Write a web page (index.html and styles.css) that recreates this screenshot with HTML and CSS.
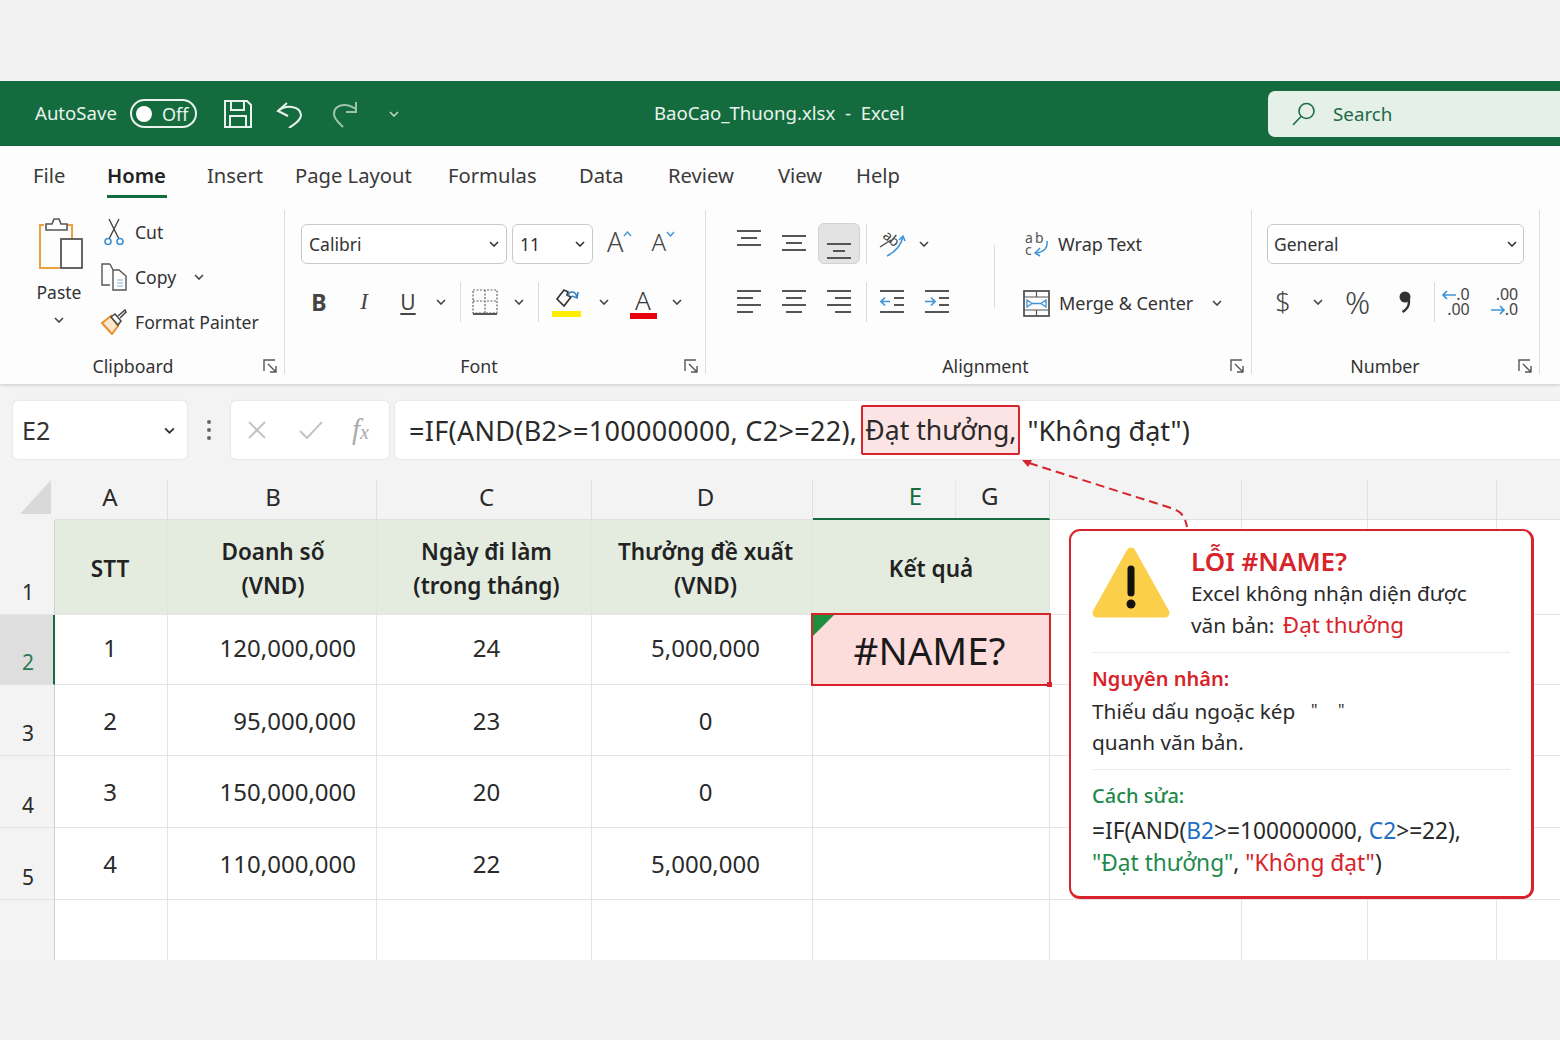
FILE: index.html
```html
<!DOCTYPE html>
<html lang="en">

<head>
    <meta charset="UTF-8">
    <title>BaoCao_Thuong.xlsx - Excel</title>
    <link rel="stylesheet" href="styles.css">
</head>

<body>
    <svg class="defs" width="0" height="0">
        <symbol id="chev" viewBox="0 0 10 6">
            <path d="M1 1l4 4 4-4" fill="none" stroke="currentColor" stroke-width="1.6" />
        </symbol>
        <symbol id="launch" viewBox="0 0 15 15">
            <path d="M1 12V1h11M5 5l8 8M13 7v6H7" fill="none" stroke="#555" stroke-width="1.4" />
        </symbol>
    </svg>

    <div class="app">
        <header class="titlebar">
            <div class="autosave">AutoSave</div>
            <div class="toggle"><i></i><span>Off</span></div>
            <svg class="save" width="28" height="28" viewBox="0 0 28 28" fill="none" stroke="#e9f3ed" stroke-width="2">
                <path d="M1 1h22l4 4v22H1z" />
                <path d="M7 1v9h13V1M6 27V16h16v11" />
            </svg>
            <svg class="undo" width="26" height="28" viewBox="0 0 26 28" fill="none" stroke="#e9f3ed" stroke-width="2">
                <path d="M11 3L2 11l10 5" />
                <path d="M2 11C9 5 24 5 25 15c0 6-7 9-12 13" />
            </svg>
            <svg class="redo" width="26" height="28" viewBox="0 0 26 28" fill="none" stroke="#9cc4ad" stroke-width="2">
                <path d="M24 2v10h-10" />
                <path d="M24 9C12 1 2 6 2 14c0 5 5 9 9 13" />
            </svg>
            <svg class="qa-more" width="10" height="6"><use href="#chev" /></svg>
            <div class="doc-name">BaoCao_Thuong.xlsx &nbsp;-&nbsp; Excel</div>
            <div class="search">
                <svg width="24" height="24" viewBox="0 0 24 24" fill="none" stroke="#1d6b45" stroke-width="1.6">
                    <circle cx="14.5" cy="9" r="7.5" />
                    <path d="M9 14.5L1 23" />
                </svg>
                <span>Search</span>
            </div>
        </header>

        <section class="ribbon">
            <nav class="tabs">
                <span>File</span>
                <span class="active">Home</span>
                <span>Insert</span>
                <span>Page Layout</span>
                <span>Formulas</span>
                <span>Data</span>
                <span>Review</span>
                <span>View</span>
                <span>Help</span>
            </nav>

            <div class="groups">
                <div class="group clipboard">
                    <div class="clip-body">
                        <div class="paste">
                            <svg width="44" height="52" viewBox="0 0 44 52" fill="none">
                                <path d="M5 7H1v43h20" stroke="#e8a13c" stroke-width="2" />
                                <path d="M28 7h5v14" stroke="#e8a13c" stroke-width="2" />
                                <path d="M7 12V6h6l2-5h5l2 5h6v6z" stroke="#555" stroke-width="1.6" fill="#fff" />
                                <rect x="22" y="21" width="21" height="29" stroke="#555" stroke-width="1.8" fill="#fff" />
                            </svg>
                            <span>Paste</span>
                            <svg class="chev" width="10" height="6"><use href="#chev" /></svg>
                        </div>
                        <div class="clip-list">
                            <div class="clip-item">
                                <svg width="26" height="28" viewBox="0 0 26 28" fill="none">
                                    <path d="M8 1l10 20M18 1L8 21" stroke="#444" stroke-width="1.4" />
                                    <circle cx="7" cy="23.500" r="3" stroke="#3b8fd0" stroke-width="1.6" />
                                    <circle cx="19" cy="23.500" r="3" stroke="#3b8fd0" stroke-width="1.6" />
                                </svg>
                                <span>Cut</span>
                            </div>
                            <div class="clip-item">
                                <svg width="26" height="28" viewBox="0 0 26 28" fill="none">
                                    <path d="M9 1H1v21h8" stroke="#555" stroke-width="1.4" />
                                    <path d="M9 1l3 6M12 7h6l7 6v14H12z" stroke="#555" stroke-width="1.4" fill="#fff" />
                                    <path d="M16 17h6M16 20h6M16 23h6" stroke="#7fb0d8" stroke-width="1.2" />
                                </svg>
                                <span>Copy</span>
                                <svg class="chev copy-chev" width="10" height="6"><use href="#chev" /></svg>
                            </div>
                            <div class="clip-item">
                                <svg width="26" height="26" viewBox="0 0 26 26" fill="none">
                                    <path d="M1 14l9-7 7 10-6 8z" stroke="#e8922c" stroke-width="2" fill="#fbe7cd" />
                                    <path d="M10 8l4-3 6 7-3 4z" stroke="#444" stroke-width="1.5" fill="#fff" />
                                    <path d="M17 7l7-6 1 2-6 6" stroke="#444" stroke-width="1.5" />
                                </svg>
                                <span>Format Painter</span>
                            </div>
                        </div>
                    </div>
                    <div class="group-foot">
                        <span class="group-label">Clipboard</span>
                        <svg class="launcher" width="15" height="15"><use href="#launch" /></svg>
                    </div>
                </div>

                <div class="group font">
                    <div class="font-row1">
                        <div class="combo font-name">Calibri <svg width="10" height="6"><use href="#chev" /></svg></div>
                        <div class="combo font-size">11 <svg width="10" height="6"><use href="#chev" /></svg></div>
                        <div class="grow-a">A<svg width="9" height="6" viewBox="0 0 9 6"><path d="M1 5l3.500-4L8 5" fill="none" stroke="#4a9bd8" stroke-width="1.500" /></svg></div>
                        <div class="shrink-a">A<svg width="9" height="6" viewBox="0 0 9 6"><path d="M1 1l3.500 4L8 1" fill="none" stroke="#4a9bd8" stroke-width="1.500" /></svg></div>
                    </div>
                    <div class="font-row2">
                        <b class="fmt">B</b>
                        <i class="fmt italic">I</i>
                        <span class="fmt under">U</span>
                        <svg class="chev" width="10" height="6"><use href="#chev" /></svg>
                        <div class="sep"></div>
                        <svg width="26" height="26" viewBox="0 0 26 26" fill="none">
                            <path d="M1 1h24v23H1zM13 1v23M1 12h24" stroke="#666" stroke-width="1.200" stroke-dasharray="2 1.500" />
                            <path d="M1 25h24" stroke="#555" stroke-width="2" />
                        </svg>
                        <svg class="chev" width="10" height="6"><use href="#chev" /></svg>
                        <div class="sep"></div>
                        <div class="swatch-btn">
                            <svg width="26" height="20" viewBox="0 0 26 20" fill="none">
                                <path d="M4 11l7-9 4 2-1 3 4 2-7 9z" stroke="#333" stroke-width="1.700" />
                                <path d="M15 8c1-5 7-6 9 1M25 4l-1 6-5-2" stroke="#2f7fc4" stroke-width="1.600" />
                            </svg>
                            <i class="bar-yellow"></i>
                        </div>
                        <svg class="chev" width="10" height="6"><use href="#chev" /></svg>
                        <div class="swatch-btn text-a">
                            <span>A</span>
                            <i class="bar-red"></i>
                        </div>
                        <svg class="chev" width="10" height="6"><use href="#chev" /></svg>
                    </div>
                    <div class="group-foot">
                        <span class="group-label">Font</span>
                        <svg class="launcher" width="15" height="15"><use href="#launch" /></svg>
                    </div>
                </div>

                <div class="group alignment">
                    <div class="align-body">
                        <div class="align-left">
                            <div class="align-row top-row">
                                <svg width="24" height="17" viewBox="0 0 24 17"><path d="M0 1h24M4 8h16M0 15h24" stroke="#555" stroke-width="1.800" /></svg>
                                <svg width="24" height="17" viewBox="0 0 24 17"><path d="M0 1h24M4 8h16M0 15h24" stroke="#555" stroke-width="1.800" /></svg>
                                <div class="align-on">
                                    <svg width="24" height="17" viewBox="0 0 24 17"><path d="M0 1h24M6 8h12M0 15h24" stroke="#555" stroke-width="1.800" /></svg>
                                </div>
                                <div class="sep"></div>
                                <svg class="open-icon" width="27" height="25" viewBox="0 0 27 25" fill="none">
                                    <text class="orient-text" transform="translate(3 5) rotate(40)">ab</text>
                                    <path d="M1 15l11-7" stroke="#444" stroke-width="1.300" />
                                    <path d="M8 24C16 20 22 13 24 5M20 8l4-4 2 5" stroke="#3f95d6" stroke-width="1.500" />
                                </svg>
                                <svg class="chev" width="10" height="6"><use href="#chev" /></svg>
                            </div>
                            <div class="align-row bottom-row">
                                <svg width="24" height="24" viewBox="0 0 24 24"><path d="M0 1h24M0 8h16M0 15h24M0 22h16" stroke="#555" stroke-width="1.800" /></svg>
                                <svg width="24" height="24" viewBox="0 0 24 24"><path d="M0 1h24M4 8h16M0 15h24M4 22h16" stroke="#555" stroke-width="1.800" /></svg>
                                <svg width="24" height="24" viewBox="0 0 24 24"><path d="M0 1h24M8 8h16M0 15h24M8 22h16" stroke="#555" stroke-width="1.800" /></svg>
                                <div class="sep"></div>
                                <svg width="24" height="24" viewBox="0 0 24 24" fill="none">
                                    <path d="M0 1h24M14 8h10M14 15h10M0 22h24" stroke="#555" stroke-width="1.800" />
                                    <path d="M10 11.500H1M5 7.500l-4 4 4 4" stroke="#3f95d6" stroke-width="1.700" />
                                </svg>
                                <svg width="24" height="24" viewBox="0 0 24 24" fill="none">
                                    <path d="M0 1h24M14 8h10M14 15h10M0 22h24" stroke="#555" stroke-width="1.800" />
                                    <path d="M0 11.500h9M6 7.500l4 4-4 4" stroke="#3f95d6" stroke-width="1.700" />
                                </svg>
                            </div>
                        </div>
                        <div class="vsep"></div>
                        <div class="align-right">
                            <div class="wrap-item">
                                <svg class="open-icon" width="26" height="26" viewBox="0 0 26 26" fill="none">
                                    <text class="wrap-glyph" x="2" y="12">a</text>
                                    <text class="wrap-glyph" x="12" y="12">b</text>
                                    <text class="wrap-glyph" x="2" y="24">c</text>
                                    <path d="M24 10c1 7-3 11-11 12M17 17l-5 5 5 3" stroke="#3f95d6" stroke-width="1.500" />
                                </svg>
                                <span>Wrap Text</span>
                            </div>
                            <div class="wrap-item">
                                <svg width="27" height="27" viewBox="0 0 27 27" fill="none">
                                    <rect x="1" y="1" width="25" height="25" stroke="#555" stroke-width="1.800" />
                                    <path d="M1 7h25M1 20h25M13.500 1v6M13.500 20v6" stroke="#555" stroke-width="1.200" />
                                    <path d="M4 10v7l5-3.500zM23 10v7l-5-3.500zM9 13.500h9" stroke="#3f95d6" stroke-width="1.300" />
                                </svg>
                                <span>Merge &amp; Center</span>
                                <svg class="chev merge-chev" width="10" height="6"><use href="#chev" /></svg>
                            </div>
                        </div>
                    </div>
                    <div class="group-foot">
                        <span class="group-label">Alignment</span>
                        <svg class="launcher" width="15" height="15"><use href="#launch" /></svg>
                    </div>
                </div>

                <div class="group number">
                    <div class="combo general">General <svg width="10" height="6"><use href="#chev" /></svg></div>
                    <div class="number-row">
                        <span class="num-sym dollar">$</span>
                        <svg class="chev" width="10" height="6"><use href="#chev" /></svg>
                        <span class="num-sym percent">%</span>
                        <svg width="12" height="22" viewBox="0 0 12 22">
                            <circle cx="6" cy="6" r="5.500" fill="#333" />
                            <path d="M9.500 7c1.500 6-1 11-6 14" fill="none" stroke="#333" stroke-width="2.400" />
                        </svg>
                        <div class="sep"></div>
                        <div class="dec">
                            <span class="dec-line"><svg width="14" height="10" viewBox="0 0 14 10" fill="none"><path d="M14 5H1M5 1L1 5l4 4" stroke="#3f95d6" stroke-width="1.700" /></svg>.0</span>
                            <span>.00</span>
                        </div>
                        <div class="dec">
                            <span>.00</span>
                            <span class="dec-line"><svg width="14" height="10" viewBox="0 0 14 10" fill="none"><path d="M0 5h13M9 1l4 4-4 4" stroke="#3f95d6" stroke-width="1.700" /></svg>.0</span>
                        </div>
                    </div>
                    <div class="group-foot">
                        <span class="group-label">Number</span>
                        <svg class="launcher" width="15" height="15"><use href="#launch" /></svg>
                    </div>
                </div>
            </div>
        </section>

        <section class="formula-bar">
            <div class="name-box"><span>E2</span><svg width="11" height="7"><use href="#chev" /></svg></div>
            <div class="dots"><i></i><i></i><i></i></div>
            <div class="fx-box">
                <svg width="20" height="20" viewBox="0 0 20 20"><path d="M2 2l16 16M18 2L2 18" stroke="#c4c4c4" stroke-width="2" /></svg>
                <svg width="24" height="18" viewBox="0 0 24 18" fill="none"><path d="M1 10l7 7L23 1" stroke="#c4c4c4" stroke-width="2" /></svg>
                <span class="fx">f<small>x</small></span>
            </div>
            <div class="formula"><span class="formula-start">=IF(AND(B2&gt;=100000000, C2&gt;=22),</span><span class="formula-bad">Đạt thưởng,</span>"Không đạt")</div>
        </section>

        <section class="sheet">
            <div class="hd corner"><i></i></div>
            <div class="hd col">A</div>
            <div class="hd col">B</div>
            <div class="hd col">C</div>
            <div class="hd col">D</div>
            <div class="hd col col-e"><span class="e">E</span><span class="g">G</span></div>
            <div class="hd col"></div>
            <div class="hd col"></div>
            <div class="hd col"></div>
            <div class="hd col last"></div>

            <div class="rh">1</div>
            <div class="c th">STT</div>
            <div class="c th">Doanh số<br>(VND)</div>
            <div class="c th">Ngày đi làm<br>(trong tháng)</div>
            <div class="c th">Thưởng đề xuất<br>(VND)</div>
            <div class="c th">Kết quả</div>
            <div class="c"></div><div class="c"></div><div class="c"></div><div class="c last"></div>

            <div class="rh sel">2</div>
            <div class="c row2">1</div>
            <div class="c row2 money">120,000,000</div>
            <div class="c row2">24</div>
            <div class="c row2">5,000,000</div>
            <div class="c err">#NAME?</div>
            <div class="c"></div><div class="c"></div><div class="c"></div><div class="c last"></div>

            <div class="rh">3</div>
            <div class="c">2</div>
            <div class="c money">95,000,000</div>
            <div class="c">23</div>
            <div class="c">0</div>
            <div class="c"></div>
            <div class="c"></div><div class="c"></div><div class="c"></div><div class="c last"></div>

            <div class="rh">4</div>
            <div class="c">3</div>
            <div class="c money">150,000,000</div>
            <div class="c">20</div>
            <div class="c">0</div>
            <div class="c"></div>
            <div class="c"></div><div class="c"></div><div class="c"></div><div class="c last"></div>

            <div class="rh">5</div>
            <div class="c">4</div>
            <div class="c money">110,000,000</div>
            <div class="c">22</div>
            <div class="c">5,000,000</div>
            <div class="c"></div>
            <div class="c"></div><div class="c"></div><div class="c"></div><div class="c last"></div>

            <div class="rh end"></div>
            <div class="c end"></div><div class="c end"></div><div class="c end"></div><div class="c end"></div><div class="c end"></div>
            <div class="c end"></div><div class="c end"></div><div class="c end"></div><div class="c last end"></div>
        </section>

        <!-- mui ten tu callout len cong thuc -->
        <svg class="pointer" width="180" height="80" viewBox="0 0 180 80" fill="none">
            <path d="M8 5L150 50C160 53 164 58 166 69" stroke="#d8232a" stroke-width="2" stroke-dasharray="9 5" />
            <path d="M1 2l10 0-4 7z" fill="#d8232a" />
        </svg>

        <aside class="callout">
            <div class="callout-top">
                <svg width="78" height="73" viewBox="0 0 78 73">
                    <path d="M39 5L73 66H5z" fill="#fbcf4a" stroke="#fbcf4a" stroke-width="9" stroke-linejoin="round" />
                    <path d="M39 22v24" stroke="#111" stroke-width="7" stroke-linecap="round" />
                    <circle cx="39" cy="57" r="4.500" fill="#111" />
                </svg>
                <div class="callout-head">
                    <h2>LỖI #NAME?</h2>
                    <p>Excel không nhận diện được</p>
                    <p>văn bản: <span class="red big">Đạt thưởng</span></p>
                </div>
            </div>
            <div class="callout-part">
                <h3 class="red">Nguyên nhân:</h3>
                <p>Thiếu dấu ngoặc kép <span class="quotes">"</span><span class="quotes">"</span></p>
                <p>quanh văn bản.</p>
            </div>
            <div class="callout-part fix">
                <h3 class="green">Cách sửa:</h3>
                <p>=IF(AND(<span class="blue">B2</span>&gt;=100000000, <span class="blue">C2</span>&gt;=22),</p>
                <p><span class="green">"Đạt thưởng"</span>, <span class="red">"Không đạt"</span>)</p>
            </div>
        </aside>
    </div>
</body>

</html>
```

FILE: styles.css
```css
* {
    box-sizing: border-box;
}

body {
    margin: 0;
    background-color: #f2f2f2;
    color: #333;
    font-family: "Noto Sans", "Open Sans", sans-serif;
    overflow: hidden;
}

svg {
    display: block;
    flex: none;
}

.defs {
    position: absolute;
}

.app {
    position: relative;
    width: 1560px;
    height: 1040px;
    padding-top: 81px;
    overflow: hidden;
}

/* title bar */
.titlebar {
    height: 65px;
    padding-left: 35px;
    background-color: #146c3e;
    color: #e9f3ed;
    display: flex;
    align-items: center;
    font-size: 18.6px;
    line-height: 24px;
    position: relative;
}

.autosave {
    width: 95px;
    padding-bottom: 2px;
}

.toggle {
    width: 67px;
    height: 29px;
    border: 2px solid #e9f3ed;
    border-radius: 15px;
    padding-left: 4px;
    display: flex;
    align-items: center;
    gap: 10px;
    font-size: 18px;
}

.toggle i {
    width: 16px;
    height: 16px;
    border-radius: 50%;
    background-color: #fff;
}

.save {
    margin-left: 27px;
}

.undo {
    margin-left: 24px;
}

.redo {
    margin-left: 30px;
}

.qa-more {
    margin-left: 31px;
    color: #b9d6c5;
}

.doc-name {
    margin-left: 255px;
    width: 614px;
    padding-bottom: 2px;
    white-space: nowrap;
}

.search {
    width: 292px;
    height: 46px;
    padding-left: 24px;
    border-radius: 7px 0 0 7px;
    background-color: #e4f0e8;
    color: #1d6b45;
    font-size: 18.8px;
    display: flex;
    align-items: center;
    gap: 17px;
}

/* ribbon */
.ribbon {
    height: 238px;
    background-color: #fdfdfd;
    box-shadow: 0 1px 3px rgba(0, 0, 0, 0.18);
    position: relative;
}

.tabs {
    height: 64px;
    padding: 15px 0 0 33px;
    display: grid;
    grid-template-columns: 74px 100px 88px 153px 131px 89px 110px 78px 60px;
    font-size: 20.2px;
    color: #3a3a3a;
}

.tabs span {
    justify-self: start;
    height: 37px;
    white-space: nowrap;
}

.tabs .active {
    width: 60px;
    font-weight: 600;
    border-bottom: 3px solid #146c3e;
    color: #222;
}

.groups {
    display: flex;
    height: 164px;
}

.group {
    height: 164px;
    border-right: 1px solid #dcdcdc;
    display: flex;
    flex-direction: column;
    position: relative;
    font-size: 17px;
}

.group-foot {
    margin-top: auto;
    height: 24px;
    padding-right: 6px;
    display: flex;
    align-items: flex-start;
}

.launcher {
    align-self: flex-end;
}

.group-label {
    flex: 1;
    padding-top: 4px;
    text-align: center;
    color: #333;
    font-size: 17.8px;
    line-height: 24px;
}

.clipboard .group-label {
    padding-left: 3px;
}

.font .group-label {
    padding-right: 11px;
}

.alignment .group-label {
    padding-left: 35px;
}

.chev {
    color: #444;
}

.sep {
    width: 1px;
    height: 40px;
    background-color: #dcdcdc;
    justify-self: center;
}

.combo {
    height: 40px;
    border: 1px solid #c9c9c9;
    border-radius: 6px;
    background-color: #fff;
    padding: 0 7px;
    color: #333;
    font-size: 17.5px;
    display: flex;
    align-items: center;
    justify-content: space-between;
}

/* clipboard */
.clipboard {
    width: 285px;
}

.clip-body {
    display: flex;
    padding: 8px 0 0 36px;
}

.paste {
    width: 46px;
    display: flex;
    flex-direction: column;
    align-items: center;
}

.paste svg:first-child {
    margin-left: 3px;
}

.paste span {
    margin-top: 10px;
    font-size: 17.5px;
    line-height: 24px;
}

.paste .chev {
    margin-top: 13px;
}

.clip-list {
    margin-left: 19px;
    display: flex;
    flex-direction: column;
    gap: 17px;
}

.clip-item {
    height: 28px;
    display: flex;
    align-items: center;
    gap: 8px;
    font-size: 17.6px;
    white-space: nowrap;
}

.copy-chev {
    margin-left: 10px;
}

/* font */
.font {
    width: 421px;
    padding-top: 14px;
}

.font-row1 {
    padding-left: 16px;
    display: flex;
}

.font-name {
    width: 206px;
}

.font-size {
    width: 81px;
    margin-left: 5px;
}

.grow-a,
.shrink-a {
    display: flex;
    height: 36px;
    font-size: 27px;
    line-height: 36px;
    font-weight: 300;
    color: #444;
}

.grow-a {
    margin-left: 14px;
}

.shrink-a {
    margin-left: 19px;
    font-size: 24px;
}

.grow-a svg,
.shrink-a svg {
    margin-top: 7px;
}

.font-row2 {
    margin-top: 18px;
    height: 40px;
    padding-left: 16px;
    display: grid;
    grid-template-columns: 36px 54px 34px 32px 6px 43px 26px 12px 44px 32px 46px 22px;
    align-items: center;
    justify-items: center;
}

.fmt {
    font-size: 23px;
    color: #444;
}

.italic {
    font-family: "Liberation Serif", serif;
}

.under {
    text-decoration: underline;
    text-underline-offset: 3px;
    font-size: 21px;
}

.swatch-btn {
    width: 30px;
    display: flex;
    flex-direction: column;
    align-items: center;
}

.bar-yellow,
.bar-red {
    width: 29px;
    height: 6px;
    margin-top: 3px;
    background-color: #ffee00;
}

.bar-red {
    width: 27px;
    margin-top: -2px;
    background-color: #e8000f;
}

.text-a {
    font-size: 26px;
    line-height: 30px;
    font-weight: 300;
}

/* alignment */
.alignment {
    width: 546px;
    padding-top: 14px;
}

.align-body {
    display: flex;
    padding-left: 21px;
}

.align-left {
    width: 235px;
}

.align-row {
    height: 40px;
    display: grid;
    align-items: center;
    justify-items: center;
}

.top-row {
    grid-template-columns: 43px 48px 42px 12px 40px 24px;
}

.top-row > svg:first-child {
    margin-top: -11px;
}

.top-row > svg:nth-child(2) {
    margin-top: -1px;
}

.bottom-row {
    margin-top: 18px;
    grid-template-columns: 43px 48px 42px 12px 40px 50px;
}

.align-on {
    width: 42px;
    height: 41px;
    margin-top: -1px;
    background-color: #e3e3e3;
    border: 1px solid #d2d2d2;
    border-radius: 6px;
    display: flex;
    align-items: center;
    justify-content: center;
    padding-top: 15px;
}

.open-icon {
    overflow: visible;
}

.orient-text {
    font-size: 14px;
    line-height: 14px;
    fill: #444;
}

.wrap-glyph {
    font-size: 14px;
    fill: #555;
}

.vsep {
    width: 1px;
    height: 63px;
    margin: 21px 0 0 32px;
    background-color: #dcdcdc;
}

.align-right {
    margin-left: 28px;
}

.wrap-item {
    height: 40px;
    display: flex;
    align-items: center;
    gap: 9px;
    font-size: 18px;
    white-space: nowrap;
}

.wrap-item + .wrap-item {
    margin-top: 19px;
}

.merge-chev {
    margin-left: 10px;
}

/* number */
.number {
    width: 288px;
    padding: 14px 0 0;
}

.general {
    width: 257px;
    margin-left: 15px;
    padding: 0 6px;
}

.number-row {
    margin-top: 18px;
    height: 40px;
    padding-left: 16px;
    display: grid;
    grid-template-columns: 30px 40px 39px 55px 4px 40px 57px;
    align-items: center;
    justify-items: center;
}

.num-sym {
    font-size: 27px;
    line-height: 36px;
    font-weight: 300;
    color: #444;
}

.percent {
    font-size: 31px;
}

.dec {
    display: flex;
    flex-direction: column;
    align-items: flex-end;
    font-size: 16px;
    line-height: 15px;
    color: #444;
}

.dec-line {
    display: flex;
    align-items: center;
}

/* formula bar */
.formula-bar {
    height: 88px;
    padding: 17px 0 0 13px;
    display: flex;
    align-items: flex-start;
    background-color: #f3f3f3;
}

.name-box,
.fx-box,
.formula {
    height: 58px;
    flex: none;
    background-color: #fff;
    border-radius: 5px;
    box-shadow: 0 0 2px rgba(0, 0, 0, 0.15);
    display: flex;
    align-items: center;
}

.name-box {
    width: 174px;
    padding: 0 12px 0 9px;
    justify-content: space-between;
    font-size: 25px;
}

.dots {
    width: 44px;
    height: 58px;
    flex: none;
    display: flex;
    flex-direction: column;
    align-items: center;
    justify-content: center;
    gap: 4px;
}

.dots i {
    width: 4px;
    height: 4px;
    border-radius: 50%;
    background-color: #666;
}

.fx-box {
    width: 158px;
    padding-left: 16px;
    gap: 32px;
}

.fx {
    font-family: "Liberation Serif", serif;
    font-style: italic;
    font-size: 29px;
    line-height: 30px;
    color: #aaa;
    margin-left: -3px;
}

.fx small {
    font-size: 20px;
}

.formula {
    width: 1180px;
    margin-left: 6px;
    padding-left: 14px;
    font-size: 27px;
    color: #2a2a2a;
    white-space: nowrap;
}

.formula-start {
    letter-spacing: 0.3px;
}

.formula-bad {
    height: 50px;
    margin: 0 7px 0 4px;
    padding: 0 2px;
    border: 2px solid #d8232a;
    border-radius: 2px;
    background-color: #fde4e4;
    font-size: 26.6px;
    display: inline-flex;
    align-items: center;
}

/* sheet */
.sheet {
    display: grid;
    grid-template-columns: 55px 113px 209px 215px 221px 237px 192px 126px 129px 63px;
    grid-template-rows: 48px 95px 70px 71px 72px 72px 60px;
    font-size: 24px;
    color: #2a2a2a;
    background-color: #f3f3f3;
}

.sheet > :nth-child(10n+2) {
    padding-right: 2px;
}

.sheet > :nth-child(10n+3) {
    padding-left: 2px;
}

.sheet > :nth-child(10n+4) {
    padding-left: 5px;
}

.sheet > :nth-child(10n+5) {
    padding-left: 7px;
}

.sheet > .money {
    padding-left: 0;
}

.hd {
    background-color: #f3f3f3;
}

.col {
    margin-top: 8px;
    display: flex;
    align-items: center;
    justify-content: center;
    padding-bottom: 6px;
    font-size: 24px;
    border-right: 1px solid #e0e0e0;
    border-bottom: 1px solid #e0e0e0;
}

.col.last {
    border-right: 0;
}

.corner {
    padding: 8px 0 0 20px;
}

.corner i {
    display: block;
    width: 31px;
    height: 34px;
    background-color: #d9d9d9;
    clip-path: polygon(100% 0, 100% 100%, 0 100%);
}

.col-e {
    justify-content: flex-start;
    padding-bottom: 0;
    border-bottom: 2px solid #146c3e;
}

.col-e .e {
    width: 143px;
    padding-right: 33px;
    text-align: right;
    color: #146c3e;
    border-right: 1px solid #e6e6e6;
    height: 38px;
    line-height: 32px;
}

.col-e .g {
    margin-left: 25px;
    line-height: 32px;
    height: 38px;
}

.rh {
    background-color: #f3f3f3;
    border-right: 1px solid #cfcfcf;
    border-bottom: 1px solid #e4e4e4;
    padding: 0 0 8px 22px;
    display: flex;
    align-items: flex-end;
    font-size: 21px;
    line-height: 28px;
}

.rh.sel {
    background-color: #dedede;
    border-right: 2px solid #146c3e;
    color: #2b7a57;
}

.c {
    background-color: #fff;
    border-right: 1px solid #e4e4e4;
    border-bottom: 1px solid #e4e4e4;
    display: flex;
    align-items: center;
    justify-content: center;
    text-align: center;
}

.c.row2 {
    padding-bottom: 4px;
}

.c.last {
    border-right: 0;
}

.c.end,
.rh.end {
    border-bottom: 0;
}

.th {
    background-color: #e3ecdf;
    font-weight: 600;
    line-height: 34px;
    font-size: 22.5px;
    color: #222;
    padding-top: 4px;
}

.money {
    justify-content: flex-end;
    padding-right: 20px;
}

.err {
    position: relative;
    background-color: #fddcdc;
    border: 2px solid #d8232a;
    margin: -2px -1px -1px -2px;
    padding: 1px 3px 0 0;
    font-size: 38.5px;
    color: #1a1a1a;
}

.err::before {
    content: "";
    position: absolute;
    left: 0;
    top: 0;
    width: 21px;
    height: 21px;
    background-color: #1e8e3e;
    clip-path: polygon(0 0, 100% 0, 0 100%);
}

.err::after {
    content: "";
    position: absolute;
    right: -3px;
    bottom: -3px;
    width: 5px;
    height: 5px;
    background-color: #d8232a;
}

/* callout */
.pointer {
    position: absolute;
    left: 1021px;
    top: 458px;
}

.callout {
    position: absolute;
    left: 1069px;
    top: 529px;
    width: 465px;
    height: 370px;
    padding: 0 21px;
    background-color: #fff;
    border: 2px solid #d8232a;
    border-right-width: 3px;
    border-bottom-width: 3px;
    border-radius: 11px;
    font-size: 20.8px;
    color: #2a2a2a;
}

.callout-top {
    height: 122px;
    padding-top: 13px;
    display: flex;
    border-bottom: 1px solid #ebebeb;
}

.callout-top > svg {
    margin-top: 3px;
}

.callout-head {
    margin-left: 21px;
}

.callout h2 {
    margin: 0;
    font-size: 26px;
    line-height: 34px;
    font-weight: 600;
    color: #d8232a;
}

.callout p {
    margin: 0;
    line-height: 31px;
    white-space: nowrap;
}

.callout h3 {
    margin: 0;
    font-size: 20px;
    line-height: 32px;
    font-weight: 600;
}

.callout-part {
    height: 117px;
    padding-top: 10px;
    border-bottom: 1px solid #ebebeb;
}

.callout-part.fix {
    border-bottom: 0;
}

.fix h3 {
    margin-bottom: 3px;
    font-weight: 500;
}

.callout .fix p {
    font-size: 22.7px;
    line-height: 32px;
}

.big {
    margin-left: 3px;
    font-size: 22.4px;
}

.quotes {
    display: inline-block;
    width: 27px;
    text-align: center;
    vertical-align: 3px;
    font-size: 16px;
}

.red {
    color: #d8232a;
}

.green {
    color: #1f8a4c;
}

.blue {
    color: #1f6fc4;
}
```
